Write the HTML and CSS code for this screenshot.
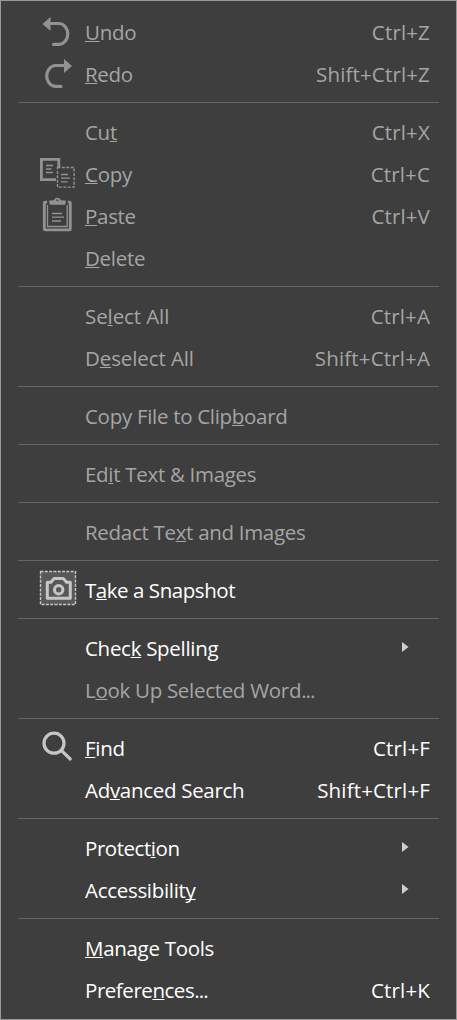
FILE: index.html
```html
<!DOCTYPE html>
<html lang="en">
<head>
<meta charset="utf-8">
<title>Edit menu</title>
<link rel="stylesheet" href="styles.css">
</head>
<body>
<ul class="menu">
  <li class="item disabled">
    <svg class="icon" viewBox="36 12 44 42"><path class="solid" d="M42.5 24 50.5 17V31Z"/><path class="line" d="M50 23.5H59.5A9.2 10.5 0 0 1 59.5 44.4H53.5"/></svg>
    <span class="label"><u>U</u>ndo</span><span class="key">Ctrl+Z</span></li>
  <li class="item disabled">
    <svg class="icon" viewBox="36 54 44 42"><path class="solid" d="M72 66 64 59V73Z"/><path class="line" d="M64 65.5H55A9.2 10.5 0 0 0 55 86.4H61"/></svg>
    <span class="label"><u>R</u>edo</span><span class="key">Shift+Ctrl+Z</span></li>
  <li class="rule"></li>
  <li class="item disabled"><span class="icon"></span><span class="label">Cu<u>t</u></span><span class="key">Ctrl+X</span></li>
  <li class="item disabled">
    <svg class="icon" viewBox="36 154 44 42"><path class="frame" d="M58.8 167V159.4H41.4V179.6H56"/><path class="fine" d="M46 165.5H53M46 169H51.5M46 172.5H53M61 174.5H68M61 178.2H70M61 181.8H67.5"/><rect class="dash" x="57.5" y="167.5" width="16.6" height="19.6"/></svg>
    <span class="label"><u>C</u>opy</span><span class="key">Ctrl+C</span></li>
  <li class="item disabled">
    <svg class="icon" viewBox="36 196 44 42"><rect class="frame" x="44.3" y="202.2" width="26" height="27.7" rx="1"/><path class="fine" d="M47.5 205V226.5H67.2V205M52 213.5H62M52 217.2H64M52 221H61"/><path class="gap" d="M47 200.5H49.3V203.8H47ZM65.7 200.5H68V203.8H65.7Z"/><path class="solid" d="M50 204.8V200.5H54A3.4 3.4 0 0 1 60.7 200.5H65V204.8Z"/><circle class="hole" cx="57.3" cy="200.2" r="1"/></svg>
    <span class="label"><u>P</u>aste</span><span class="key">Ctrl+V</span></li>
  <li class="item disabled"><span class="icon"></span><span class="label"><u>D</u>elete</span></li>
  <li class="rule"></li>
  <li class="item disabled"><span class="icon"></span><span class="label loose">Se<u>l</u>ect All</span><span class="key">Ctrl+A</span></li>
  <li class="item disabled"><span class="icon"></span><span class="label loose">D<u>e</u>select All</span><span class="key">Shift+Ctrl+A</span></li>
  <li class="rule"></li>
  <li class="item disabled"><span class="icon"></span><span class="label">Copy File to Clip<u>b</u>oard</span></li>
  <li class="rule"></li>
  <li class="item disabled"><span class="icon"></span><span class="label">Ed<u>i</u>t Text &amp; Images</span></li>
  <li class="rule"></li>
  <li class="item disabled"><span class="icon"></span><span class="label">Redact Te<u>x</u>t and Images</span></li>
  <li class="rule"></li>
  <li class="item">
    <svg class="icon" viewBox="36 570 44 42"><rect class="snap" x="40.5" y="571.5" width="35" height="33"/><path class="camera" d="M47.3 582.2H51L54 578.6H63.5L66.5 582.2H70.3V598.3H47.3Z"/><circle class="camera" cx="58.7" cy="589.7" r="4.2"/></svg>
    <span class="label tight">T<u>a</u>ke a Snapshot</span></li>
  <li class="rule"></li>
  <li class="item"><span class="icon"></span><span class="label">Chec<u>k</u> Spelling</span><svg class="arrow" viewBox="0 0 7 10"><path d="M0 0 6.5 5 0 10Z"/></svg></li>
  <li class="item disabled"><span class="icon"></span><span class="label">L<u>o</u>ok Up Selected Word<span class="dots">...</span></span></li>
  <li class="rule"></li>
  <li class="item">
    <svg class="icon" viewBox="36 728 44 42"><circle class="line" cx="54" cy="743.2" r="10"/><path class="line" d="M61.3 750.3 70.2 759"/></svg>
    <span class="label"><u>F</u>ind</span><span class="key">Ctrl+F</span></li>
  <li class="item"><span class="icon"></span><span class="label">Ad<u>v</u>anced Search</span><span class="key">Shift+Ctrl+F</span></li>
  <li class="rule"></li>
  <li class="item"><span class="icon"></span><span class="label tight">Protect<u>i</u>on</span><svg class="arrow" viewBox="0 0 7 10"><path d="M0 0 6.5 5 0 10Z"/></svg></li>
  <li class="item"><span class="icon"></span><span class="label">Accessibilit<u>y</u></span><svg class="arrow" viewBox="0 0 7 10"><path d="M0 0 6.5 5 0 10Z"/></svg></li>
  <li class="rule"></li>
  <li class="item"><span class="icon"></span><span class="label"><u>M</u>anage Tools</span></li>
  <li class="item"><span class="icon"></span><span class="label tight">Prefere<u>n</u>ces<span class="dots">...</span></span><span class="key">Ctrl+K</span></li>
</ul>
</body>
</html>
```
FILE: styles.css
```css
body { margin: 0; background: #3e3e3e; }
.menu {
  box-sizing: border-box;
  width: 457px;
  height: 1020px;
  margin: 0;
  padding: 11px 17px 7px;
  border: 1px solid #999;
  background: #3e3e3e;
  list-style: none;
  font: 20.5px/40px "Open Sans", "Noto Sans", sans-serif;
  color: #fff;
}
.item { display: flex; align-items: center; height: 42px; padding: 0 9px 0 18px; color: #fff; white-space: pre; }
.item.disabled { color: #a5a5a5; }
.icon { width: 44px; height: 42px; flex: none; color: #c6c6c6; fill: none; stroke-width: 0; }
.disabled .icon { color: #929292; }
.label, .key { margin-bottom: 2px; }
.label { margin-left: 5px; flex: 1; letter-spacing: -0.3px; }
.label.loose { letter-spacing: -0.1px; }
.label.tight { letter-spacing: -0.45px; }
.label .dots { letter-spacing: -0.9px; }
.key { text-align: right; letter-spacing: 0.15px; }
u { text-decoration: underline 1px; text-underline-offset: 1px; text-decoration-skip-ink: none; }
.rule { height: 1px; margin: 6px 0 9px; background: #666; }
.arrow { width: 7px; height: 10px; margin-right: 21px; margin-bottom: 4px; fill: #d0d0d0; }
.solid { fill: currentColor; }
.line { stroke: currentColor; stroke-width: 3.2; stroke-linecap: round; }
.frame { stroke: currentColor; stroke-width: 2.8; }
.fine { stroke: currentColor; stroke-width: 1.3; }
.dash { stroke: currentColor; stroke-width: 1.4; stroke-dasharray: 3 1.4; }
.gap, .hole { fill: #3e3e3e; }
.snap { fill: #585858; stroke: currentColor; stroke-width: 1.4; stroke-dasharray: 3 1.3; }
.camera { stroke: currentColor; stroke-width: 3; stroke-linejoin: round; }
```
